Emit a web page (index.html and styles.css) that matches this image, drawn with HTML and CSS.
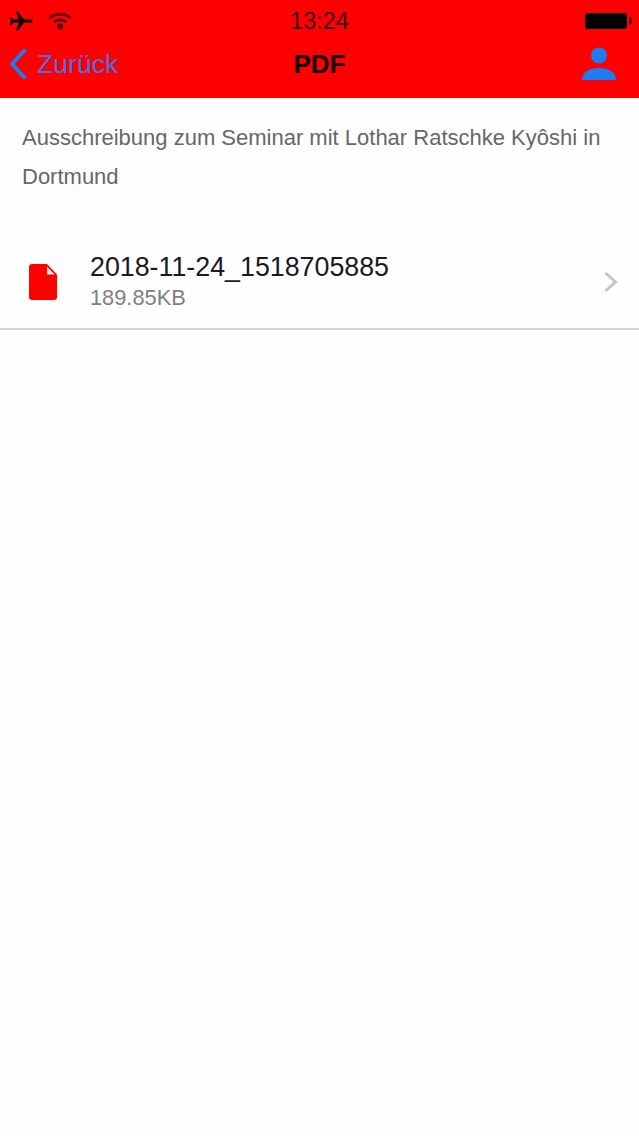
FILE: index.html
```html
<!DOCTYPE html>
<html lang="de">
<head>
    <meta charset="UTF-8">
    <meta name="viewport" content="width=device-width, initial-scale=1.0">
    <title>PDF</title>
    <link rel="stylesheet" href="styles.css">
</head>
<body>
    <div class="header">
        <!-- Status bar -->
        <div class="status-bar">
            <div class="status-left">
                <svg class="plane-icon" width="26" height="22" viewBox="0 0 26 22">
                    <path d="M25 11c0-1-1.500-1.600-3-1.600h-6L10 1.500H8l2.800 7.900H5.500L3.500 7H1.800l1 4-1 4h1.700l2-2.400h5.300L8 20.500h2l6-7.900h6c1.500 0 3-.6 3-1.600z" fill="#0a0000"/>
                </svg>
                <svg class="wifi-icon" width="24" height="18" viewBox="0 0 24 18">
                    <path d="M1.500 6C7.500 .8 16.500 .8 22.500 6" class="wifi-arc"/>
                    <path d="M6 10C9.500 7 14.500 7 18 10" class="wifi-arc"/>
                    <circle cx="12" cy="14.500" r="3" fill="#4a0000"/>
                </svg>
            </div>
            <div class="status-time">13:24</div>
            <div class="battery">
                <div class="battery-body"></div>
                <div class="battery-tip"></div>
            </div>
        </div>

        <!-- Nav bar -->
        <div class="nav-bar">
            <div class="back-link">
                <svg width="20" height="34" viewBox="0 0 20 34">
                    <path d="M17.500 2.500L4 17l13.500 14.500" fill="none" stroke="#1e7cf0" stroke-width="4"/>
                </svg>
                <span>Zurück</span>
            </div>
            <div class="nav-title">PDF</div>
            <svg class="user-icon" width="34" height="34" viewBox="0 0 34 34">
                <circle cx="17" cy="8.500" r="8" fill="#1e7cf0"/>
                <path d="M0 33c0-8 7-12 17-12s17 4 17 12z" fill="#1e7cf0"/>
            </svg>
        </div>
    </div>

    <p class="description">Ausschreibung zum Seminar mit Lothar Ratschke Kyôshi in Dortmund</p>

    <div class="file-row">
        <svg class="file-icon" width="28" height="36" viewBox="0 0 28 36">
            <path d="M3 0h15l10 10.500V33a3 3 0 0 1-3 3H3a3 3 0 0 1-3-3V3a3 3 0 0 1 3-3z" fill="#ff0000"/>
            <path d="M18 2.500l7.500 8H18z" fill="#fde8e8"/>
        </svg>
        <div class="file-info">
            <div class="file-name">2018-11-24_1518705885</div>
            <div class="file-size">189.85KB</div>
        </div>
        <svg class="chevron" width="16" height="24" viewBox="0 0 16 24">
            <path d="M2.500 3l10 9-10 9" fill="none" stroke="#c4c4c8" stroke-width="3"/>
        </svg>
    </div>
</body>
</html>
```

FILE: styles.css
```css
body {
    font-family: "Liberation Sans", Arial, sans-serif;
    margin: 0;
    padding: 0;
    background: #fefefe;
}

.header {
    background: #ff0000;
    height: 98px;
}

.status-bar {
    display: flex;
    align-items: center;
    justify-content: space-between;
    height: 41px;
    padding: 0 7px 0 8px;
    position: relative;
}

.status-left {
    display: flex;
    align-items: center;
    gap: 14px;
}

.wifi-arc {
    fill: none;
    stroke: #5a0000;
    stroke-width: 2.8;
}

.status-time {
    position: absolute;
    left: 0;
    right: 0;
    top: 8px;
    font-size: 23.5px;
    color: #3a0000;
    text-align: center;
}

.battery {
    display: flex;
    align-items: center;
    gap: 2px;
}

.battery-body {
    width: 42px;
    height: 16px;
    background: #000;
    border-radius: 3px;
}

.battery-tip {
    width: 3px;
    height: 7px;
    background: #500000;
    border-radius: 0 2px 2px 0;
}

.nav-bar {
    display: flex;
    align-items: center;
    justify-content: space-between;
    height: 46px;
    padding: 0 23px 0 8px;
    position: relative;
}

.back-link {
    display: flex;
    align-items: center;
    gap: 9px;
    color: #4a6fe0;
    font-size: 26.6px;
}

.nav-title {
    position: absolute;
    left: 0;
    right: 0;
    text-align: center;
    font-size: 26px;
    font-weight: bold;
    color: #120000;
}

.user-icon {
    position: relative;
}

.description {
    margin: 0;
    padding: 20px 30px 0 22px;
    font-size: 22px;
    line-height: 39px;
    color: #66666c;
}

.file-row {
    display: flex;
    align-items: center;
    margin-top: 40px;
    padding: 0 20px 0 29px;
    height: 92px;
    border-bottom: 2px solid #d4d4d6;
}

.file-icon {
    flex-shrink: 0;
}

.file-info {
    flex: 1;
    margin-left: 33px;
}

.file-name {
    font-size: 26.8px;
    line-height: 32px;
    color: #1a1a1e;
}

.file-size {
    font-size: 21.8px;
    line-height: 30px;
    color: #808086;
}
```
